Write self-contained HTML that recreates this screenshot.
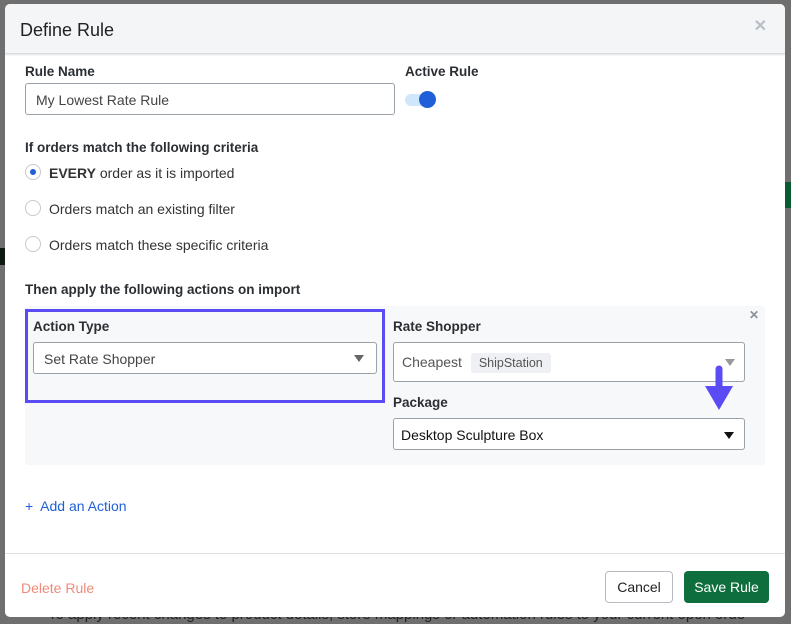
<!DOCTYPE html>
<html><head><meta charset="utf-8"><style>
*{box-sizing:border-box;margin:0;padding:0}
body{width:791px;height:624px;background:#6f6f6f;font-family:"Liberation Sans",sans-serif;position:relative;overflow:hidden;color:#222}
.bgtxt{position:absolute;left:48px;top:606px;font-size:15px;color:#222}
.modal{position:absolute;left:5px;top:4px;width:780px;height:613px;background:#fff;border-radius:5px;overflow:hidden}
.hdr{height:50px;background:#f4f5f7;border-bottom:1px solid #d8dbe0;box-shadow:0 1px 2px rgba(0,0,0,.12);position:relative}
.hdr h1{font-weight:normal;font-size:18px;position:absolute;left:15px;top:16px;color:#222}
.x{position:absolute;color:#b8bec6;font-size:16px;font-weight:bold}
.lbl{position:absolute;font-size:13.5px;font-weight:bold;color:#2b2f33}
.t{position:absolute;font-size:14px;color:#333}
.inp{position:absolute;border:1px solid #9aa1a9;border-radius:3px;background:#fff;font-size:14px;color:#444}
.radio{position:absolute;width:16px;height:16px;border:1px solid #c5cad0;border-radius:50%;background:#fff}
.caret{position:absolute;width:0;height:0;border-left:5px solid transparent;border-right:5px solid transparent;border-top:7px solid #666}
</style></head><body>
<div class="bgtxt">To apply recent changes to product details, store mappings or automation rules to your current open orde</div>
<div style="position:absolute;left:0;top:248px;width:5px;height:17px;background:#0d1a12"></div>
<div style="position:absolute;left:785px;top:182px;width:6px;height:26px;background:#0b5a33"></div>
<div class="modal">
 <div class="hdr"><h1>Define Rule</h1><div class="x" style="right:18px;top:12px">✕</div></div>
 <div class="lbl" style="left:20px;top:60px">Rule Name</div>
 <div class="lbl" style="left:400px;top:60px">Active Rule</div>
 <div class="inp" style="left:20px;top:79px;width:370px;height:32px;padding:8px 10px">My Lowest Rate Rule</div>
 <div style="position:absolute;left:400px;top:90px;width:28px;height:12px;border-radius:6px;background:#cfe6fb"></div>
 <div style="position:absolute;left:414px;top:87px;width:17px;height:17px;border-radius:50%;background:#1f5fd8"></div>
 <div class="lbl" style="left:20px;top:136px">If orders match the following criteria</div>
 <div class="radio" style="left:20px;top:160px"><div style="position:absolute;left:4px;top:4px;width:6px;height:6px;border-radius:50%;background:#1f5fd8"></div></div>
 <div class="t" style="left:44px;top:161px"><b>EVERY</b> order as it is imported</div>
 <div class="radio" style="left:20px;top:196px"></div>
 <div class="t" style="left:44px;top:197px">Orders match an existing filter</div>
 <div class="radio" style="left:20px;top:232px"></div>
 <div class="t" style="left:44px;top:233px">Orders match these specific criteria</div>
 <div class="lbl" style="left:20px;top:278px">Then apply the following actions on import</div>
 <div style="position:absolute;left:20px;top:302px;width:740px;height:159px;background:#f7f8fa;border-radius:3px"></div>
 <div style="position:absolute;left:20px;top:305px;width:360px;height:94px;border:3px solid #5b4bf5"></div>
 <div class="lbl" style="left:28px;top:315px">Action Type</div>
 <div class="inp" style="left:28px;top:338px;width:344px;height:32px;padding:8px 10px">Set Rate Shopper</div>
 <div class="caret" style="left:349px;top:351px"></div>
 <div class="x" style="left:744px;top:304px;font-size:12px;color:#8a9098">✕</div>
 <div class="lbl" style="left:388px;top:315px">Rate Shopper</div>
 <div class="inp" style="left:388px;top:338px;width:352px;height:40px;padding:11px 8px;color:#555">Cheapest <span style="background:#eef0f3;border-radius:3px;padding:3px 8px;font-size:12.5px;margin-left:5px">ShipStation</span></div>
 <div class="caret" style="left:720px;top:355px;border-top-color:#999"></div>
 <div class="lbl" style="left:388px;top:391px">Package</div>
 <div class="inp" style="left:388px;top:414px;width:352px;height:32px;padding:8px 7px;color:#111">Desktop Sculpture Box</div>
 <div class="caret" style="left:719px;top:428px;border-top-color:#111"></div>
 <svg style="position:absolute;left:697px;top:360px" width="36" height="50" viewBox="0 0 36 50"><path d="M17 5 L17 30" stroke="#5b4bf5" stroke-width="7" stroke-linecap="round"/><path d="M3 22 L31 22 L17 46 Z" fill="#5b4bf5"/></svg>
 <div class="t" style="left:20px;top:494px;color:#1f5fd8">+&nbsp; Add an Action</div>
 <div style="position:absolute;left:0;top:549px;width:780px;height:1px;background:#dde1e6"></div>
 <div class="t" style="left:16px;top:576px;color:#f08a7a">Delete Rule</div>
 <div style="position:absolute;left:600px;top:567px;width:68px;height:32px;border:1px solid #b8bcc2;border-radius:4px;font-size:14px;line-height:30px;text-align:center;color:#222">Cancel</div>
 <div style="position:absolute;left:679px;top:567px;width:85px;height:32px;background:#0e6e3d;border-radius:4px;font-size:14px;line-height:32px;text-align:center;color:#fff">Save Rule</div>
</div>
</body></html>
